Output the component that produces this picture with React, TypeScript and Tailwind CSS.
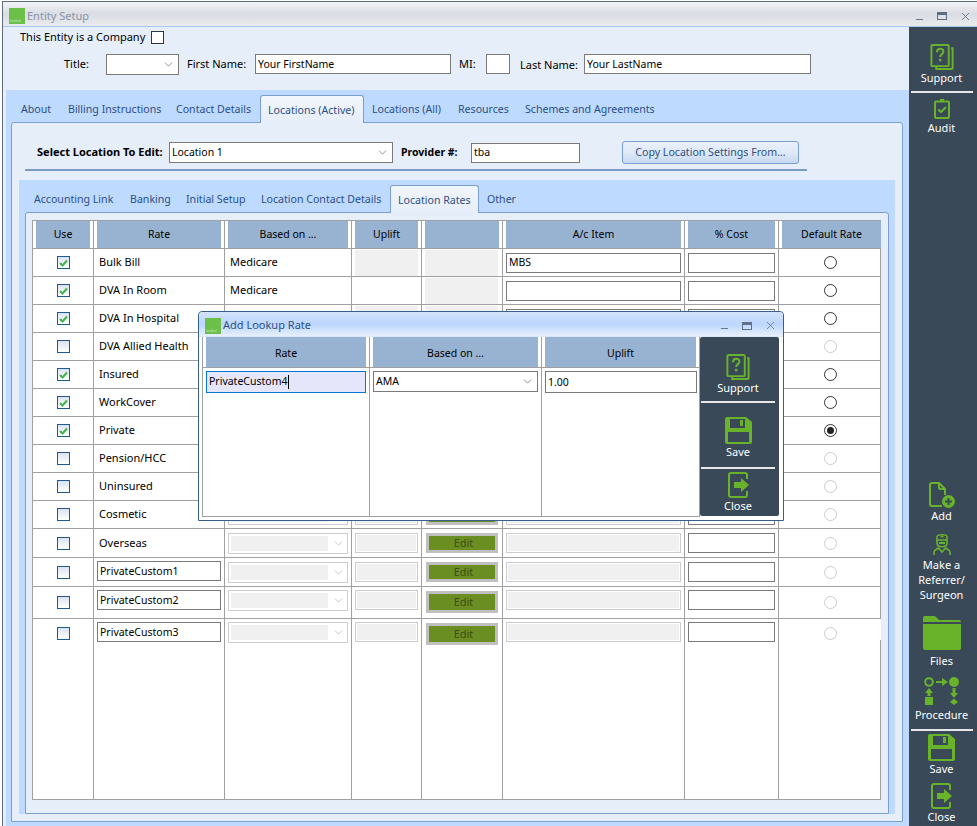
import type { ReactNode } from 'react';
import { ChevronDown, Minus, X } from 'lucide-react';

const GREEN = '#69b32b';

type RateRow = {
  name: string;
  used?: boolean;
  custom?: boolean;
  based?: string;
  mode: 'fixed' | 'open';
  item?: string;
  radio: 'on' | 'off' | 'selected' | 'disabled';
};

const rows: RateRow[] = [
  { name: 'Bulk Bill', used: true, based: 'Medicare', mode: 'fixed', item: 'MBS', radio: 'off' },
  { name: 'DVA In Room', used: true, based: 'Medicare', mode: 'fixed', item: '', radio: 'off' },
  { name: 'DVA In Hospital', used: true, based: 'Medicare', mode: 'fixed', item: '', radio: 'off' },
  { name: 'DVA Allied Health', mode: 'open', radio: 'disabled' },
  { name: 'Insured', used: true, mode: 'open', radio: 'off' },
  { name: 'WorkCover', used: true, mode: 'open', radio: 'off' },
  { name: 'Private', used: true, mode: 'open', radio: 'selected' },
  { name: 'Pension/HCC', mode: 'open', radio: 'disabled' },
  { name: 'Uninsured', mode: 'open', radio: 'disabled' },
  { name: 'Cosmetic', mode: 'open', radio: 'disabled' },
  { name: 'Overseas', mode: 'open', radio: 'disabled' },
  { name: 'PrivateCustom1', custom: true, mode: 'open', radio: 'disabled' },
  { name: 'PrivateCustom2', custom: true, mode: 'open', radio: 'disabled' },
  { name: 'PrivateCustom3', custom: true, mode: 'open', radio: 'disabled' },
];

const mainTabs = [
  { label: 'About', cls: 'w-[47px] pl-[8px]' },
  { label: 'Billing Instructions', cls: 'w-[108px] pl-[8px]' },
  { label: 'Contact Details', cls: 'w-[92px] pl-[8px]' },
  { label: 'Locations (Active)', cls: 'w-[104px] pl-[8px]', active: true },
  { label: 'Locations (All)', cls: 'w-[86px] pl-[8px]' },
  { label: 'Resources', cls: 'w-[67px] pl-[8px]' },
  { label: 'Schemes and Agreements', cls: 'w-[150px] pl-[8px]' },
];

const subTabs = [
  { label: 'Accounting Link', cls: 'w-[96px] pl-[8px]' },
  { label: 'Banking', cls: 'w-[56px] pl-[8px]' },
  { label: 'Initial Setup', cls: 'w-[75px] pl-[8px]' },
  { label: 'Location Contact Details', cls: 'w-[137px] pl-[8px]' },
  { label: 'Location Rates', cls: 'w-[89px] pl-[8px]', active: true },
  { label: 'Other', cls: 'w-[50px] pl-[8px]' },
];

function Logo() {
  return (
    <div className="flex h-[16px] w-[16px] shrink-0 items-end bg-[#6cc04a] pb-px pl-px text-[3px] leading-none text-[#cfe8c0]">
      medical
    </div>
  );
}

function SupportIcon() {
  return (
    <svg width="24" height="26" viewBox="0 0 24 27" fill="none" stroke={GREEN} strokeWidth="2">
      <rect x="1" y="1" width="18" height="22" rx="1" />
      <path d="M21.5 4.5 H23 V25 a1 1 0 0 1 -1 1 H6 V24" />
      <path d="M6.8 8.5 C6.8 3.8 13.4 3.8 13.4 8 C13.4 10.4 10.1 10.6 10.1 13.4" strokeWidth="2.2" />
      <path d="M8.8 15.4 h2.6 v2.6 h-2.6 z" fill={GREEN} stroke="none" />
    </svg>
  );
}

function AuditIcon() {
  return (
    <svg width="16" height="20" viewBox="0 0 16 20" fill="none" stroke={GREEN} strokeWidth="2">
      <rect x="1" y="2.5" width="14" height="16.5" rx="1" />
      <path d="M6 0 h4 v3 h-4 z" fill={GREEN} stroke="none" />
      <path d="M4.2 10.5 L7 13 L12 8" />
    </svg>
  );
}

function AddIcon() {
  return (
    <svg width="26" height="26" viewBox="0 0 26 26" fill="none">
      <path d="M13 24 H3 a2 2 0 0 1 -2 -2 V3 a2 2 0 0 1 2 -2 H10 L16 7 V13" stroke={GREEN} strokeWidth="2" />
      <path d="M10 1 V6 a1 1 0 0 0 1 1 H16" stroke={GREEN} strokeWidth="2" />
      <circle cx="19.5" cy="19.5" r="6.5" fill={GREEN} />
      <path d="M19.5 16 V23 M16 19.5 H23" stroke="#394958" strokeWidth="2" />
    </svg>
  );
}

function SurgeonIcon() {
  return (
    <svg width="18" height="23" viewBox="0 0 18 23" fill="none" stroke={GREEN} strokeWidth="1.6">
      <path d="M4 4 C4 1 14 1 14 4 V7 H4 Z" />
      <path d="M7.5 3.6 h3" />
      <path d="M4 7 V10 C4 15 14 15 14 10 V7" />
      <path d="M6 9 h6 v2 h-6 z" fill={GREEN} stroke="none" />
      <path d="M1 22 V19 C1 17 4 16 5.5 15 L9 19 L12.5 15 C14 16 17 17 17 19 V22" />
    </svg>
  );
}

function FolderIcon() {
  return (
    <svg width="38" height="35" viewBox="0 0 38 35">
      <path d="M0 6 V2 a2 2 0 0 1 2 -2 H11 a3 3 0 0 1 2 1 L16 4 H36 a2 2 0 0 1 2 2 V6 Z" fill={GREEN} />
      <path d="M0 8 H38 V32 a2 2 0 0 1 -2 2 H2 a2 2 0 0 1 -2 -2 Z" fill={GREEN} />
    </svg>
  );
}

function ProcedureIcon() {
  return (
    <svg width="38" height="28" viewBox="0 0 38 28" fill={GREEN} stroke="none">
      <circle cx="6" cy="5" r="3.8" fill="none" stroke={GREEN} strokeWidth="2" />
      <circle cx="31" cy="5" r="5" />
      <path d="M13 4 H19 V1 L25 5 L19 9 V6 H13 Z" />
      <path d="M6 11 L10 16 H7.5 V19 H4.5 V16 H2 Z" />
      <path d="M29.5 11 H32.5 V16 H35 L31 21 L27 16 H29.5 Z" />
      <rect x="2" y="20" width="8" height="8" />
      <path d="M31 21.5 L35 25 L31 28 L27 25 Z" />
    </svg>
  );
}

function SaveIcon() {
  return (
    <svg width="27" height="27" viewBox="0 0 27 27" fill={GREEN}>
      <path
        fillRule="evenodd"
        d="M2 0 H21 L27 5 V25 a2 2 0 0 1 -2 2 H2 a2 2 0 0 1 -2 -2 V2 a2 2 0 0 1 2 -2 Z M5 2 V11 H20 V2 Z M3 15 V25 H24 V15 Z"
      />
      <rect x="15" y="3" width="3" height="6" />
    </svg>
  );
}

function CloseIcon() {
  return (
    <svg width="21" height="26" viewBox="0 0 21 26" fill="none">
      <path d="M19 7 V3 a2 2 0 0 0 -2 -2 H3 a2 2 0 0 0 -2 2 V23 a2 2 0 0 0 2 2 H17 a2 2 0 0 0 2 -2 V19" stroke={GREEN} strokeWidth="2" />
      <path d="M6 10 H13 V6 L21 13 L13 20 V16 H6 Z" fill={GREEN} />
    </svg>
  );
}

function SideItem({ icon, label, cls }: { icon: ReactNode; label: ReactNode; cls: string }) {
  return (
    <div className={`flex flex-col items-center text-center text-[11px] leading-[15px] text-white ${cls}`}>
      {icon}
      {label}
    </div>
  );
}

function Divider({ cls = 'w-[62px]' }: { cls?: string }) {
  return <div className={`mx-auto h-[2px] shrink-0 bg-[#e8e8e8] ${cls}`} />;
}

function Field({ value = '', cls, disabled }: { value?: string; cls: string; disabled?: boolean }) {
  if (disabled) {
    return (
      <div className={`border border-[#cccccc] bg-white p-[1px] ${cls}`}>
        <div className="h-full w-full bg-[#f0f0f0]" />
      </div>
    );
  }
  return (
    <input
      readOnly
      value={value}
      className={`block border border-[#7a7a7a] bg-white pb-[1px] pl-[2px] font-['Liberation_Sans',sans-serif] text-[10.5px] leading-none text-black outline-none ${cls}`}
    />
  );
}

function Dropdown({ value = '', cls }: { value?: string; cls: string }) {
  return (
    <div className={`flex items-center justify-between border border-[#7a7a7a] bg-white pr-[3px] pl-[2px] font-['Liberation_Sans',sans-serif] text-[10.5px] text-black ${cls}`}>
      <span>{value}</span>
      <ChevronDown size={13} strokeWidth={1.2} color="#555555" />
    </div>
  );
}

function Check({ on }: { on?: boolean }) {
  return (
    <div className="flex h-[13px] w-[13px] items-center justify-center border border-[#1c5a96] bg-gradient-to-b from-[#d9e3f0] to-white">
      {on && (
        <svg width="9" height="8" viewBox="0 0 9 8" fill="none" stroke="#45b04e" strokeWidth="2">
          <path d="M1 4 L3.5 6.5 L8 1.5" />
        </svg>
      )}
    </div>
  );
}

function Radio({ state }: { state: RateRow['radio'] }) {
  const border = state === 'disabled' ? 'border-[#cccccc]' : 'border-[#333333]';
  return (
    <div className={`flex h-[13px] w-[13px] items-center justify-center rounded-full border bg-white ${border}`}>
      {state === 'selected' && <div className="h-[7px] w-[7px] rounded-full bg-[#222222]" />}
    </div>
  );
}

function HeadCell({ label, cls = 'border-r px-[3px]', textCls = '' }: { label?: string; cls?: string; textCls?: string }) {
  return (
    <div className={`border-b border-[#a0a0a0] ${cls}`}>
      <div className={`flex h-full items-center justify-center bg-[#98b3d1] text-[10.5px] text-black ${textCls}`}>{label}</div>
    </div>
  );
}

function Cell({ children, cls = '' }: { children?: ReactNode; cls?: string }) {
  return <div className={`relative flex border-r border-b border-[#a0a0a0] ${cls}`}>{children}</div>;
}

function TabStrip({ tabs, rowCls }: { tabs: { label: string; cls: string; active?: boolean }[]; rowCls: string }) {
  return (
    <div className={`relative z-10 flex items-end ${rowCls}`}>
      {tabs.map((tab) => (
        <div
          key={tab.label}
          className={`-mb-px flex h-[28px] shrink-0 items-center pt-[2px] text-[10.6px] whitespace-nowrap text-[#2b4f86] ${tab.cls} ${
            tab.active ? 'rounded-t-[3px] border border-b-0 border-[#7b9fd0] bg-gradient-to-b from-[#f2f6fc] to-[#e6eef9] !pl-[7px]' : ''
          }`}
        >
          {tab.label}
        </div>
      ))}
    </div>
  );
}

function RateTableRow({ row, index }: { row: RateRow; index: number }) {
  const last = index === rows.length - 1;
  const based = row.based;
  const pad = index >= 12 ? 'pt-[3px]' : 'items-center';
  const align = row.mode === 'open' ? pad : 'items-center';
  return (
    <>
      <Cell cls={`justify-center ${last ? 'pt-[8px]' : 'items-center'}`}>
        <Check on={row.used} />
      </Cell>
      <Cell cls={`${row.custom ? 'px-[3px] pt-[3px]' : 'items-center pl-[5px]'}`}>
        {row.custom ? (
          <Field value={row.name} cls="h-[20px] w-[124px]" />
        ) : (
          <span className="text-[11px] text-black">{row.name}</span>
        )}
      </Cell>
      <Cell cls={`px-[3px] ${align}`}>
        {based ? (
          <span className="pl-[2px] text-[11px] text-black">{based}</span>
        ) : (
          <div className="flex h-[21px] w-[120px] items-center border border-[#cccccc] bg-white p-[2px]">
            <div className="h-full w-[97px] bg-[#f0f0f0]" />
            <ChevronDown size={13} strokeWidth={1.2} color="#aaaaaa" className="ml-[4px]" />
          </div>
        )}
      </Cell>
      <Cell cls={`px-[3px] ${align}`}>
        {row.mode === 'fixed' ? (
          index === 1 ? null : <div className="h-[26px] w-[63px] bg-[#f0f0f0]" />
        ) : (
          <Field disabled cls="h-[20px] w-[63px]" />
        )}
      </Cell>
      <Cell cls={`px-[3px] ${align}`}>
        {row.mode === 'fixed' ? (
          <div className="h-[26px] w-[73px] bg-[#f0f0f0]" />
        ) : (
          <div
            className={`ml-[1px] flex w-[72px] items-center justify-center border-[3px] border-[#c0c0c0] bg-[#6b8e23] pl-[3px] text-[11px] text-[#3b4f14] ${
              index >= 12 ? 'mt-[1px] h-[22px]' : 'h-[20px]'
            }`}
          >
            Edit
          </div>
        )}
      </Cell>
      <Cell cls={`px-[3px] ${align}`}>
        {row.mode === 'fixed' ? (
          <Field value={row.item} cls="h-[20px] w-[175px]" />
        ) : (
          <Field disabled cls="h-[20px] w-[175px]" />
        )}
      </Cell>
      <Cell cls={`px-[3px] ${align}`}>
        <Field cls="h-[20px] w-[87px]" />
      </Cell>
      <Cell cls={`justify-center pl-[1px] ${last ? 'pt-[8px]' : 'items-center'}`}>
        <Radio state={row.radio} />
        {last && <div className="absolute top-0 -right-px h-[21px] w-px bg-white" />}
      </Cell>
    </>
  );
}

function WindowControls({ tone, cls }: { tone: string; cls: string }) {
  return (
    <div className={`ml-auto flex items-center gap-[12px] ${cls}`} style={{ color: tone }}>
      <Minus size={11} strokeWidth={2} className="translate-y-[3px]" />
      <div className="h-[8px] w-[10px] border border-t-[3px] border-current" />
      <X size={13} strokeWidth={1.5} />
    </div>
  );
}

function LookupDialog() {
  return (
    <div className="absolute top-[311px] left-[198px] z-20 flex h-[210px] w-[586px] flex-col rounded-t-[4px] border border-[#365f8e] bg-white">
      <div className="flex h-[25px] shrink-0 items-center rounded-t-[4px] border-b border-[#dbe7f8] bg-gradient-to-b from-[#d3e3fa] via-[#bcd6fd] to-[#e6effc] px-[6px] pt-[3px]">
        <Logo />
        <span className="ml-[2px] text-[11px] text-[#2b4f86]">Add Lookup Rate</span>
        <WindowControls tone="#5f7088" cls="" />
      </div>
      <div className="flex pl-[3px]">
        <div className="grid h-[180px] w-[498px] grid-cols-[167px_172px_158px] grid-rows-[31px_1fr] border-b border-l border-[#a0a0a0]">
          <HeadCell label="Rate" textCls="pt-[3px]" />
          <HeadCell label="Based on ..." textCls="pt-[3px]" />
          <HeadCell label="Uplift" textCls="pt-[3px]" />
          <div className="border-r border-[#a0a0a0] px-[3px] pt-[3px]">
            <div className="flex h-[22px] items-center border border-[#0078d7] bg-[#e6e6fa] pl-[2px] font-['Liberation_Sans',sans-serif] text-[10.5px] text-black">
              PrivateCustom4
              <span className="ml-px h-[14px] w-px bg-black" />
            </div>
          </div>
          <div className="border-r border-[#a0a0a0] px-[3px] pt-[3px]">
            <Dropdown value="AMA" cls="h-[21px] w-[165px]" />
          </div>
          <div className="border-r border-[#a0a0a0] pt-[3px] pl-[3px]">
            <Field value="1.00" cls="h-[22px] w-[152px]" />
          </div>
        </div>
        <div className="flex h-[179px] w-[79px] flex-col rounded-[2px] bg-[#394958] pr-[3px]">
          <SideItem icon={<SupportIcon />} label="Support" cls="h-[64px] pt-[17px]" />
          <Divider cls="w-[74px]" />
          <SideItem icon={<SaveIcon />} label="Save" cls="h-[64px] pt-[14px]" />
          <Divider cls="w-[74px]" />
          <SideItem icon={<CloseIcon />} label="Close" cls="pt-[3px]" />
        </div>
      </div>
    </div>
  );
}

export default function App() {
  return (
    <div className="relative h-[826px] w-[977px] overflow-hidden bg-white pt-px pl-[2px] font-['Noto_Sans',sans-serif]">
      <div className="flex h-[825px] flex-col border-t border-l border-[#5f6b80]">
        <div className="flex h-[25px] shrink-0 items-center border-b border-[#a9c8f0] bg-gradient-to-b from-[#f2f3f5] via-[#d9dce3] to-[#ebebeb] pt-[4px] pl-[6px]">
          <Logo />
          <span className="ml-[2px] text-[11px] text-[#8894a8]">Entity Setup</span>
          <WindowControls tone="#606c80" cls="pr-[5px]" />
        </div>

        <div className="flex min-h-0 flex-1">
          <div className="flex min-w-0 flex-1 flex-col bg-[#e6eef9] pl-[3px]">
            <div className="h-[63px] shrink-0 text-[11px] text-black">
              <div className="flex items-center pt-[2px] pl-[14px]">
                <span>This Entity is a Company</span>
                <div className="ml-[6px] h-[13px] w-[13px] border border-[#333333] bg-white" />
              </div>
              <div className="mt-[8px] flex items-center pl-[58px]">
                <span className="w-[42px]">Title:</span>
                <Dropdown cls="h-[21px] w-[73px]" />
                <span className="ml-[8px] w-[68px]">First Name:</span>
                <Field value="Your FirstName" cls="h-[20px] w-[196px]" />
                <span className="ml-[8px] w-[27px]">MI:</span>
                <Field cls="h-[20px] w-[24px]" />
                <span className="ml-[10px] w-[64px] pt-[3px]">Last Name:</span>
                <Field value="Your LastName" cls="h-[20px] w-[227px]" />
              </div>
            </div>

            <div className="flex min-h-0 flex-1 flex-col bg-[#bfdaff] pb-[4px]">
              <TabStrip tabs={mainTabs} rowCls="h-[32px] pl-[7px]" />
              <div className="mr-[6px] ml-[5px] flex min-h-0 flex-1 flex-col rounded-t-[3px] border border-[#7b9fd0] bg-[#e6eef9]">
                <div className="flex shrink-0 items-center pt-[18px] pl-[25px] text-[11px] text-black">
                  <span className="w-[132px] font-bold">Select Location To Edit:</span>
                  <Dropdown value="Location 1" cls="h-[21px] w-[224px]" />
                  <span className="ml-[8px] w-[70px] text-[10.5px] font-bold">Provider #:</span>
                  <Field value="tba" cls="h-[20px] w-[109px]" />
                  <div className="ml-[42px] flex h-[23px] w-[177px] items-center justify-center rounded-[3px] border border-[#7b9fd0] bg-gradient-to-b from-[#e9f0fa] via-[#dfe9f7] to-[#c6d8f0] text-[10.6px] text-[#2b4f86]">
                    Copy Location Settings From...
                  </div>
                </div>
                <div className="mt-[5px] ml-[13px] h-[2px] w-[782px] shrink-0 bg-[#7a9bc6]" />

                <div className="mx-[7px] mt-[9px] mb-[7px] flex min-h-0 flex-1 flex-col bg-[#bfdaff]">
                  <TabStrip tabs={subTabs} rowCls="h-[32px] pl-[7px]" />
                  <div className="mx-[6px] min-h-0 flex-1 rounded-t-[3px] border border-[#7b9fd0] bg-[#e6eef9] px-[6px] pt-[7px]">
                    <div className="grid h-[580px] w-[849px] grid-cols-[61px_131px_127px_70px_81px_182px_94px_102px] grid-rows-[repeat(11,28px)_29px_29px_32px_1fr] border-t border-l border-[#a0a0a0] bg-white">
                      <HeadCell label="Use" />
                      <HeadCell label="Rate" />
                      <HeadCell label="Based on ..." />
                      <HeadCell label="Uplift" />
                      <HeadCell />
                      <HeadCell label="A/c Item" />
                      <HeadCell label="% Cost" />
                      <HeadCell label="Default Rate" cls="pl-[3px]" />
                      {rows.map((row, index) => (
                        <RateTableRow key={row.name} row={row} index={index} />
                      ))}
                    </div>
                  </div>
                </div>
              </div>
            </div>
          </div>

          <div className="flex w-[68px] shrink-0 flex-col bg-[#394958] pr-[3px]">
            <SideItem icon={<SupportIcon />} label="Support" cls="h-[64px] pt-[17px]" />
            <Divider />
            <SideItem icon={<AuditIcon />} label="Audit" cls="pt-[6px] gap-[1px]" />
            <SideItem icon={<AddIcon />} label="Add" cls="mt-auto" />
            <SideItem
              icon={<SurgeonIcon />}
              label={
                <span>
                  Make a
                  <br />
                  Referrer/
                  <br />
                  Surgeon
                </span>
              }
              cls="mt-[10px] gap-[1px]"
            />
            <SideItem icon={<FolderIcon />} label="Files" cls="mt-[14px] gap-[2px]" />
            <SideItem icon={<ProcedureIcon />} label="Procedure" cls="mt-[9px] gap-[2px]" />
            <div className="mt-[7px]">
              <Divider />
            </div>
            <SideItem icon={<SaveIcon />} label="Save" cls="mt-[3px]" />
            <SideItem icon={<CloseIcon />} label="Close" cls="mt-[7px] pb-[2px]" />
          </div>
        </div>
      </div>
      <LookupDialog />
    </div>
  );
}
